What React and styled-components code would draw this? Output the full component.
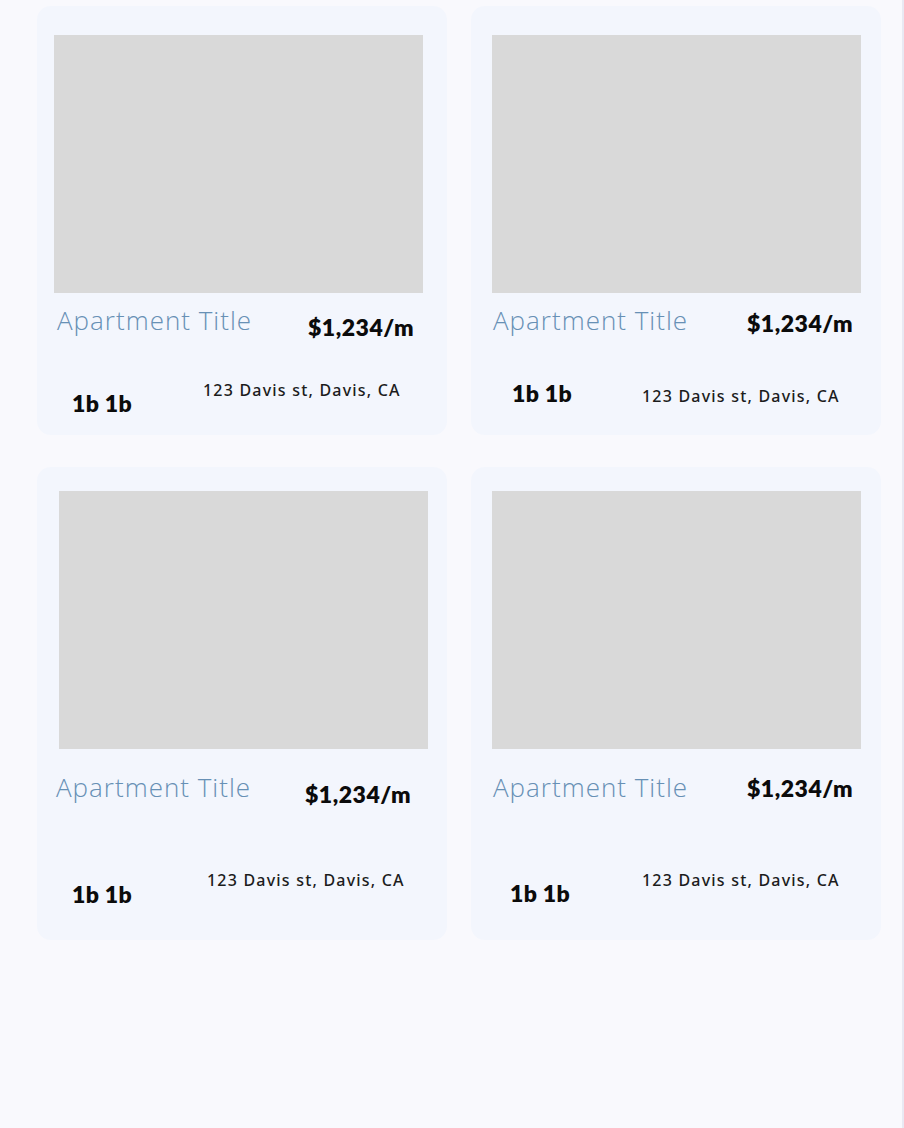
import React from 'react'
import styled, { createGlobalStyle } from 'styled-components'

const GlobalStyle = createGlobalStyle`
  html, body {
    margin: 0;
    padding: 0;
    background: #f9f9fd;
  }
  body {
    font-family: "Lato", "Liberation Sans", sans-serif;
  }
`

const Page = styled.div`
  min-height: 1128px;
  box-sizing: border-box;
  border-right: 2px solid #e9e9f3;
  padding: 6px 0 0 37px;
`

const Grid = styled.div`
  display: grid;
  grid-template-columns: 410px 410px;
  column-gap: 24px;
  row-gap: 32px;
`

const Card = styled.div`
  height: ${p => p.$h}px;
  box-sizing: border-box;
  background: #f3f6fd;
  border-radius: 14px;
  padding: ${p => p.$padTop}px 0 0 ${p => p.$padLeft}px;
  display: flex;
  flex-direction: column;
`

const Photo = styled.div`
  width: 369px;
  height: 258px;
  margin-left: ${p => p.$x}px;
  background: #d9d9d9;
`

const TitleRow = styled.div`
  display: flex;
  align-items: flex-start;
  margin-top: ${p => p.$y}px;
`

const Title = styled.div`
  width: ${p => p.$w}px;
  box-sizing: border-box;
  padding-left: ${p => p.$x}px;
  font-family: "Open Sans", sans-serif;
  font-weight: 300;
  font-size: 26px;
  letter-spacing: 1px;
  line-height: 30px;
  color: #6790b5;
`

const Price = styled.div`
  margin-top: ${p => p.$y}px;
  font-family: "Lato", sans-serif;
  font-weight: 800;
  font-size: 23px;
  letter-spacing: 0.5px;
  line-height: 30px;
  color: #0b0b0b;
`

const InfoRow = styled.div`
  display: flex;
  align-items: flex-start;
  margin-top: ${p => p.$y}px;
`

const Beds = styled.div`
  width: ${p => p.$w}px;
  box-sizing: border-box;
  padding-left: ${p => p.$x}px;
  margin-top: ${p => p.$y}px;
  font-family: "Lato", sans-serif;
  font-weight: 800;
  font-size: 23px;
  letter-spacing: 0.3px;
  line-height: 26px;
  color: #0b0b0b;
`

const Address = styled.div`
  margin-top: ${p => p.$y}px;
  font-family: "Noto Sans", sans-serif;
  font-weight: 500;
  font-size: 16px;
  letter-spacing: 1.2px;
  line-height: 20px;
  color: #1c1c1c;
`

const cards = [
  { h: 429, top: 29, left: 17, img: 0, titleY: 12, titleX: 3, titleW: 254, priceY: 7, infoY: 36, bedsX: 18, bedsW: 149, bedsY: 12, addrY: 2 },
  { h: 429, top: 29, left: 21, img: 0, titleY: 12, titleX: 1, titleW: 255, priceY: 3, infoY: 40, bedsX: 20, bedsW: 150, bedsY: 2, addrY: 8 },
  { h: 473, top: 24, left: 18, img: 4, titleY: 23, titleX: 1, titleW: 250, priceY: 7, infoY: 58, bedsX: 17, bedsW: 152, bedsY: 14, addrY: 3 },
  { h: 473, top: 24, left: 21, img: 0, titleY: 23, titleX: 1, titleW: 255, priceY: 1, infoY: 63, bedsX: 18, bedsW: 150, bedsY: 14, addrY: 4 },
]

function Listing({ c }) {
  return (
    <Card $h={c.h} $padTop={c.top} $padLeft={c.left}>
      <Photo $x={c.img} />
      <TitleRow $y={c.titleY}>
        <Title $x={c.titleX} $w={c.titleW}>Apartment Title</Title>
        <Price $y={c.priceY}>$1,234/m</Price>
      </TitleRow>
      <InfoRow $y={c.infoY}>
        <Beds $x={c.bedsX} $w={c.bedsW} $y={c.bedsY}>1b 1b</Beds>
        <Address $y={c.addrY}>123 Davis st, Davis, CA</Address>
      </InfoRow>
    </Card>
  )
}

export default function App() {
  return (
    <>
      <GlobalStyle />
      <Page>
        <Grid>
          {cards.map((c, i) => (
            <Listing key={i} c={c} />
          ))}
        </Grid>
      </Page>
    </>
  )
}
